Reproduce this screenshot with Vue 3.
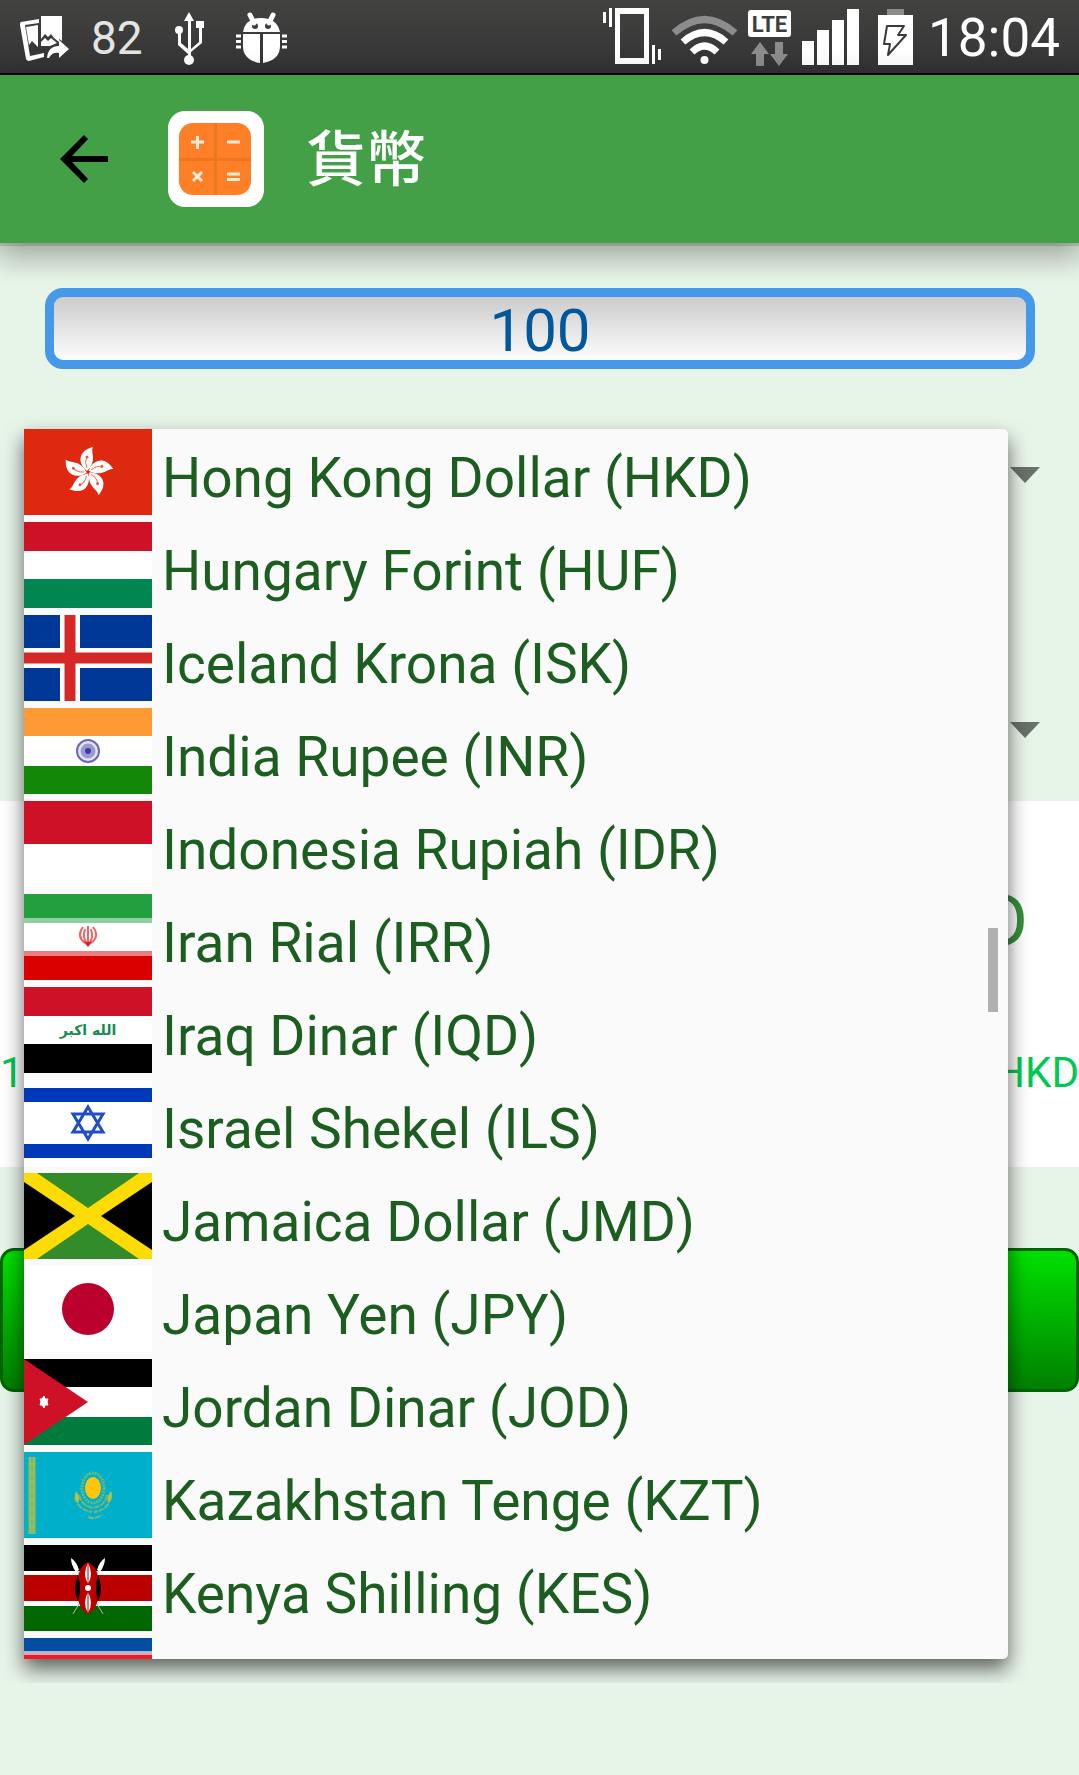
<script setup>
import { ref } from 'vue'

const amount = ref('100')
const from = ref('USD')
const to = ref('HKD')

const currencies = [
  { code: 'HKD', name: 'Hong Kong Dollar', stripes: [[0, 86, '#de2910']] },
  { code: 'HUF', name: 'Hungary Forint', stripes: [[0, 29, '#ce1126'], [29, 28, '#fff'], [57, 29, '#008751']] },
  { code: 'ISK', name: 'Iceland Krona', stripes: [[0, 86, '#003897']] },
  { code: 'INR', name: 'India Rupee', stripes: [[0, 28, '#ff9933'], [28, 30, '#fff'], [58, 28, '#138808']] },
  { code: 'IDR', name: 'Indonesia Rupiah', stripes: [[0, 43, '#ce1126'], [43, 43, '#fff']] },
  { code: 'IRR', name: 'Iran Rial', stripes: [[0, 24, '#239f40'], [24, 5, '#90cf9f'], [29, 28, '#fff'], [57, 5, '#ec8080'], [62, 24, '#da0000']] },
  { code: 'IQD', name: 'Iraq Dinar', stripes: [[0, 29, '#ce1126'], [29, 28, '#fff'], [57, 29, '#000']] },
  { code: 'ILS', name: 'Israel Shekel', stripes: [[0, 86, '#fff'], [8, 14, '#0038b8'], [64, 14, '#0038b8']] },
  { code: 'JMD', name: 'Jamaica Dollar', stripes: [[0, 86, '#fcdc04']] },
  { code: 'JPY', name: 'Japan Yen', stripes: [[0, 86, '#fff']] },
  { code: 'JOD', name: 'Jordan Dinar', stripes: [[0, 28, '#000'], [28, 30, '#fff'], [58, 28, '#007a3d']] },
  { code: 'KZT', name: 'Kazakhstan Tenge', stripes: [[0, 86, '#00afca']] },
  { code: 'KES', name: 'Kenya Shilling', stripes: [[0, 26, '#000'], [26, 4, '#fff'], [30, 26, '#b00'], [56, 5, '#fff'], [61, 25, '#060']] },
  { code: 'KPW', name: '', stripes: [[0, 13, '#024fa2'], [13, 2, '#a9b9dc'], [15, 2, '#f3a3ac'], [17, 52, '#ed1c27'], [69, 3, '#fff'], [72, 14, '#024fa2']] }
]

const petals = [0, 72, 144, 216, 288]
</script>

<template>
  <div class="screen">
    <div class="status">
      <div class="status-group">
        <svg width="49" height="73" viewBox="20 0 49 73" fill="#fff">
          <path fill-rule="evenodd" d="M21 22 39 19V23L25 25 30 56 44 53V57L29 61Q27 61 26 59L20 25Q20 22 21 22Z" />
          <path d="M26 27 38 25V47L35 44 32 41 29 45Z" />
          <path d="M41 16H62V41L59 39V42L54 38 51 34 48 37 45 34 41 39Z" />
          <path d="M41 42 45 38 48 41 51 38 57 43 50 46H41Z" />
          <path d="M59 40 69 49 59 58V53Q52 52 49 58H47Q48 46 59 46Z" />
        </svg>
        <span class="temp">82</span>
        <svg class="spaced" width="29" height="73" viewBox="174 0 29 73" fill="#fff">
          <path d="M188 12 193 21H190V49L198 42V28H195V21H203V28H201V43L190 52V60H187V54L177 45V33H180V43L187 49V21H183Z" />
          <circle cx="178" cy="30" r="4" /><circle cx="188" cy="60" r="5" />
        </svg>
        <svg class="spaced" width="51" height="73" viewBox="236 0 51 73" fill="#fff">
          <path d="M250 15 254 23M273 15 269 23" stroke="#fff" stroke-width="5" stroke-linecap="round" />
          <path fill-rule="evenodd" d="M243 32Q245 18 261 18T280 32ZM255 23A3 3 0 1 0 255 29A3 3 0 1 0 255 23ZM268 23A3 3 0 1 0 268 29A3 3 0 1 0 268 23Z" />
          <path d="M243 34H260V63Q243 60 243 46ZM263 34H280V46Q280 60 263 63Z" />
          <path d="M236 36H241M236 41.500H241M236 47H241M282 36H287M282 41.500H287M282 47H287" stroke="#fff" stroke-width="3" />
        </svg>
      </div>
      <div class="status-group right">
        <svg width="58" height="73" viewBox="604 0 58 73" fill="#fff">
          <path fill-rule="evenodd" d="M616 8H650V64H616ZM621 14V58H645V14Z" />
          <path d="M604 12h3v11h-3zM610 8h3v19h-3zM653 45h3v19h-3zM659 49h3v11h-3z" />
        </svg>
        <svg width="65" height="73" viewBox="673 0 65 73" fill="none" stroke="#fff" stroke-width="7">
          <path d="M675 33Q705.500 6 736 33" stroke="#8c8c8c" />
          <path d="M684 42Q705.500 23 727 42" /><path d="M693 52Q705.500 40 718 52" />
          <circle cx="705.500" cy="60" r="4" fill="#fff" stroke="none" />
        </svg>
        <svg width="43" height="73" viewBox="750 0 43 73" fill="#8c8c8c">
          <rect x="750" y="10" width="43" height="27" rx="3" fill="#fff" />
          <text class="lte" x="771.500" y="32" text-anchor="middle">LTE</text>
          <path d="M762 42 771 54H766V66H758V54H753ZM777 42H785V54H790L781 66 772 54H777Z" />
        </svg>
        <svg width="57" height="73" viewBox="804 0 57 73" fill="#fff">
          <path d="M804 41h12v24h-12zM819 30h12v35h-12zM834 20h12v45h-12zM849 9h12v56h-12z" />
        </svg>
        <svg class="battery" width="35" height="73" viewBox="880 0 35 73">
          <path d="M889 9h17v6h-17z" fill="#8c8c8c" /><path d="M880 15h35v50h-35z" fill="#fff" />
          <path d="M889 26H906L900 35H908L890 55 892 44H886Z" fill="#fff" stroke="#3b3b3b" stroke-width="2" stroke-linejoin="round" />
        </svg>
        <time class="clock">18:04</time>
      </div>
    </div>

    <header class="bar">
      <button class="back" type="button" aria-label="Back">
        <svg width="48" height="48" viewBox="0 0 48 48"><path d="M48 21V27H12L28 44 24 48 0 24 24 0 28 4 12 21Z" /></svg>
      </button>
      <svg class="logo" width="96" height="96" viewBox="0 0 96 96">
        <rect width="96" height="96" rx="17" fill="#fff" />
        <rect x="11" y="12" width="72" height="72" rx="14" fill="#ff7f27" />
        <path d="M47.500 12V84M11 48.500H83" stroke="#ee7620" stroke-width="3" />
        <path d="M23 31H36M29.500 25V38M59 31H72M25 61 34 70M34 61 25 70M59 63H72M59 68.500H72" stroke="#ffeadb" stroke-width="3" />
      </svg>
      <h1>貨幣</h1>
    </header>

    <main>
      <input v-model="amount" class="amount" type="text" inputmode="numeric" aria-label="Amount">
      <div class="picker first">
        <select v-model="from" aria-label="From currency"><option value="USD">USD</option></select>
        <svg width="30" height="16" viewBox="0 0 30 16"><path d="M0 0H30L15 16Z" fill="#697069" /></svg>
      </div>
      <div class="picker second">
        <select v-model="to" aria-label="To currency"><option value="HKD">HKD</option></select>
        <svg width="30" height="16" viewBox="0 0 30 16"><path d="M0 0H30L15 16Z" fill="#697069" /></svg>
      </div>
      <section class="result">
        <div class="total">HKD</div>
        <div class="rate"><span>1</span><span>HKD</span></div>
      </section>
      <button class="go" type="button" aria-label="Convert"></button>

      <div class="popup">
        <ul role="listbox" aria-label="Currency">
          <li v-for="c in currencies" :key="c.code" role="option" :aria-label="c.code">
            <svg class="flag" width="128" height="86" viewBox="0 0 128 86">
              <rect v-for="(s, i) in c.stripes" :key="i" width="128" :y="s[0]" :height="s[1]" :fill="s[2]" />
              <g v-if="c.code === 'HKD'" transform="translate(64 43)">
                <g v-for="a in petals" :key="a" :transform="`rotate(${a})`">
                  <path d="M-1-1C-10-8-11-21 5-25 2-19 10-12-1-1Z" fill="#fff" />
                  <path d="M-1-4Q-4-10-1-15" fill="none" stroke="#e8735f" stroke-width="1" />
                  <circle cx="-1" cy="-15" r="1.500" fill="#e05a45" />
                </g>
              </g>
              <g v-else-if="c.code === 'ISK'">
                <path d="M46 0V86M0 43H128" stroke="#fff" stroke-width="20" />
                <path d="M46 0V86M0 43H128" stroke="#d72828" stroke-width="11" />
              </g>
              <g v-else-if="c.code === 'INR'" fill="none" stroke="#6a68bb">
                <circle cx="64" cy="43" r="11" stroke-width="2" fill="#e4e4f4" />
                <circle cx="64" cy="43" r="5" stroke="#9b9ad2" stroke-width="5" />
                <circle cx="64" cy="43" r="3" fill="#3a3aa0" stroke="none" />
              </g>
              <g v-else-if="c.code === 'IRR'" fill="none" stroke="#e66" stroke-width="2">
                <path d="M64 32V50M59 33Q52 42 61 49M69 33Q76 42 67 49M61 35Q58 44 63 49M67 35Q70 44 65 49" />
                <path d="M60 48H68L64 53Z" fill="#da2020" stroke="none" />
              </g>
              <text v-else-if="c.code === 'IQD'" class="takbir" x="64" y="48" text-anchor="middle">الله اكبر</text>
              <path v-else-if="c.code === 'ILS'" d="M64 27 79 52H49ZM64 59 49 34H79Z" fill="none" stroke="#1f4fc0" stroke-width="3" />
              <g v-else-if="c.code === 'JMD'">
                <path d="M13 0H115L64 35ZM13 86H115L64 51Z" fill="#328c2a" />
                <path d="M0 9 51 43 0 77ZM128 9 77 43 128 77Z" />
              </g>
              <circle v-else-if="c.code === 'JPY'" cx="64" cy="43" r="26" fill="#bc002d" />
              <g v-else-if="c.code === 'JOD'">
                <path d="M0 0 64 43 0 86Z" fill="#ce1126" />
                <path d="M20 37 21 40 24 40 23 43 24 46 21 46 20 49 18 46 16 46 17 43 16 40 18 40Z" fill="#fff" stroke="#fff" stroke-width="1" />
              </g>
              <g v-else-if="c.code === 'KZT'" fill="none">
                <path d="M8 5V82" stroke="#9bbd54" stroke-width="7" />
                <path d="M8 5V82" stroke="#7db97c" stroke-width="3" stroke-dasharray="5 4" />
                <ellipse cx="69" cy="36" rx="11" ry="15" stroke="#6cb980" stroke-width="3" stroke-dasharray="2 1" />
                <ellipse cx="69" cy="36" rx="8" ry="11" fill="#fec50c" />
                <path d="M51 45Q54 58 68 60M87 45Q84 58 70 60M55 43Q58 54 69 56Q81 54 83 43M64 65Q70 68 78 63" stroke="#73ba78" stroke-width="2" stroke-dasharray="6 1" />
                <path d="M52 39Q49 46 54 51 57 45 52 39ZM87 39Q90 46 84 51 82 45 87 39Z" fill="#bdbf3d" />
              </g>
              <g v-else-if="c.code === 'KES'">
                <path d="M49 69 78 20M79 69 50 20" stroke="#b8b8b8" stroke-width="1" />
                <path d="M47 13Q53 17 55 25L52 27Q47 20 47 13ZM81 13Q75 17 73 25L76 27Q81 20 81 13Z" fill="#fff" />
                <path d="M54 31Q60 43 54 56 48 43 54 31ZM74 31Q68 43 74 56 80 43 74 31Z" />
                <path d="M64 17Q72 21 74 31 77 43 74 55 71 66 64 69 57 66 54 55 57 43 54 31 57 20 64 17Z" fill="#b00" />
                <path d="M74 30Q79 43 74 56 70 43 74 30ZM54 30Q49 43 54 56 58 43 54 30Z" />
                <path d="M64 18Q70 29 64 39 58 29 64 18ZM64 47Q70 58 64 68 58 58 64 47Z" fill="#fff" />
                <path d="M64 19V68" stroke="#b00" stroke-width="1" />
                <circle cx="64" cy="43" r="3" fill="#fff" />
              </g>
            </svg>
            <span v-if="c.name">{{ c.name }} ({{ c.code }})</span>
          </li>
        </ul>
        <div class="thumb"></div>
      </div>
    </main>
  </div>
</template>

<style>
body {
  margin: 0;
  background: #e7f4e8;
}
</style>

<style scoped>
.screen {
  display: flex;
  flex-direction: column;
  min-height: 100vh;
  font-family: Roboto, "Noto Sans CJK TC", sans-serif;
  background: #e7f4e8;
}
.status {
  display: flex;
  justify-content: space-between;
  height: 73px;
  padding: 0 19px 0 20px;
  border-bottom: 2px solid #000;
  background: linear-gradient(#424341, #333);
}
.status-group {
  display: flex;
  align-items: center;
}
.right {
  gap: 11px;
}
.temp {
  margin-left: 22px;
  padding-top: 4px;
  font-size: 46px;
  line-height: 73px;
  color: #e4e4e4;
}
.spaced {
  margin-left: 32px;
}
.lte {
  font-family: Roboto, sans-serif;
  font-size: 22px;
  font-weight: 700;
  fill: #3e3e3e;
}
.battery {
  margin-left: 8px;
}
.clock {
  margin-left: 4px;
  padding-top: 4px;
  font-size: 53px;
  font-weight: 400;
  line-height: 73px;
  color: #fff;
}
.bar {
  position: relative;
  z-index: 1;
  display: flex;
  align-items: center;
  height: 168px;
  padding-left: 60px;
  background: #43a047;
  box-shadow: 0 3px 0 rgba(0, 0, 0, 0.12), 0 10px 28px 4px rgba(0, 0, 0, 0.32);
}
.back {
  display: flex;
  padding: 0;
  border: 0;
  background: none;
}
.logo {
  margin-left: 60px;
}
h1 {
  margin: 0 0 0 42px;
  padding-top: 4px;
  font-size: 60px;
  font-weight: 500;
  line-height: 84px;
  color: #fff;
}
main {
  position: relative;
  flex: 1;
  display: flex;
  flex-direction: column;
  padding-top: 45px;
}
.amount {
  box-sizing: border-box;
  height: 81px;
  margin: 0 44px 0 45px;
  padding: 4px 0 0;
  border: 9px solid #4698e8;
  border-radius: 18px;
  background: linear-gradient(#ccc, #fcfcfc) padding-box;
  font-family: Roboto, sans-serif;
  font-size: 60px;
  line-height: 59px;
  text-align: center;
  color: #01579b;
}
.picker {
  display: flex;
  align-items: center;
  height: 86px;
  padding: 0 39px 0 24px;
}
.first {
  margin-top: 63px;
}
.second {
  margin: 169px 0 28px;
}
select {
  flex: 1;
  height: 86px;
  margin-right: 80px;
  border: 0;
  appearance: none;
  background: none;
  font-family: Roboto, sans-serif;
  font-size: 55px;
  color: #1b5e20;
}
.result {
  padding: 79px 0 69px;
  background: #fff;
}
.total {
  margin-bottom: 84px;
  padding-right: 51px;
  font-size: 72px;
  line-height: 84px;
  text-align: right;
  color: #388e3c;
}
.rate {
  display: flex;
  justify-content: space-between;
  font-size: 42px;
  line-height: 50px;
  color: #00c853;
}
.go {
  height: 144px;
  margin-top: 81px;
  border: 3px solid #006400;
  border-radius: 14px;
  background: linear-gradient(#00e000, #008000);
}
.popup {
  position: absolute;
  top: 186px;
  right: 71px;
  bottom: 116px;
  left: 24px;
  border-radius: 0 5px 5px 0;
  background: #fafafa;
  box-shadow: 0 10px 20px rgba(0, 0, 0, 0.6);
  clip-path: inset(-24px);
}
ul {
  height: 100%;
  margin: 0;
  padding: 0;
  overflow: hidden;
  list-style: none;
}
li {
  display: flex;
  align-items: flex-start;
  gap: 10px;
  height: 93px;
  font-size: 55px;
  line-height: 99px;
  white-space: nowrap;
  color: #1b5e20;
}
.flag {
  flex: none;
}
.takbir {
  font-family: "DejaVu Sans", sans-serif;
  font-size: 14px;
  font-weight: 700;
  fill: #178a50;
}
.thumb {
  position: absolute;
  top: 499px;
  right: 10px;
  width: 10px;
  height: 84px;
  background: #b0b0b0;
}
</style>
